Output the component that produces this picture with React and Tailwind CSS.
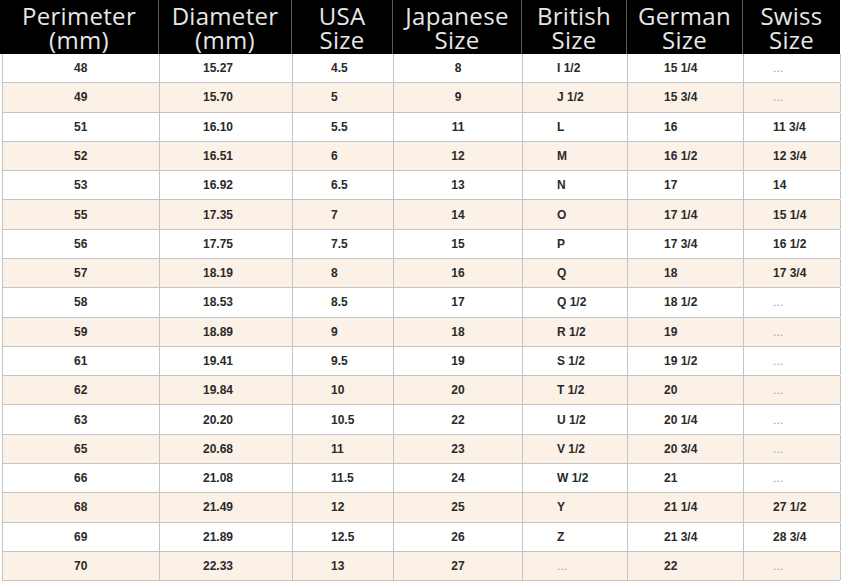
const headers = [
  ['Perimeter', '(mm)'],
  ['Diameter', '(mm)'],
  ['USA', 'Size'],
  ['Japanese', 'Size'],
  ['British', 'Size'],
  ['German', 'Size'],
  ['Swiss', 'Size'],
];

const rows = [
  ['48', '15.27', '4.5', '8', 'I 1/2', '15 1/4', '...'],
  ['49', '15.70', '5', '9', 'J 1/2', '15 3/4', '...'],
  ['51', '16.10', '5.5', '11', 'L', '16', '11 3/4'],
  ['52', '16.51', '6', '12', 'M', '16 1/2', '12 3/4'],
  ['53', '16.92', '6.5', '13', 'N', '17', '14'],
  ['55', '17.35', '7', '14', 'O', '17 1/4', '15 1/4'],
  ['56', '17.75', '7.5', '15', 'P', '17 3/4', '16 1/2'],
  ['57', '18.19', '8', '16', 'Q', '18', '17 3/4'],
  ['58', '18.53', '8.5', '17', 'Q 1/2', '18 1/2', '...'],
  ['59', '18.89', '9', '18', 'R 1/2', '19', '...'],
  ['61', '19.41', '9.5', '19', 'S 1/2', '19 1/2', '...'],
  ['62', '19.84', '10', '20', 'T 1/2', '20', '...'],
  ['63', '20.20', '10.5', '22', 'U 1/2', '20 1/4', '...'],
  ['65', '20.68', '11', '23', 'V 1/2', '20 3/4', '...'],
  ['66', '21.08', '11.5', '24', 'W 1/2', '21', '...'],
  ['68', '21.49', '12', '25', 'Y', '21 1/4', '27 1/2'],
  ['69', '21.89', '12.5', '26', 'Z', '21 3/4', '28 3/4'],
  ['70', '22.33', '13', '27', '...', '22', '...'],
];

// left padding of each data column, to follow the picture
const cellPad = ['pl-[71px]', 'pl-[43px]', 'pl-[38px]', 'justify-center', 'pl-[34px]', 'pl-[36px]', 'pl-[29px]'];

const App = () => {
  return (
    <div className="w-[843px] h-[581px] bg-white overflow-hidden">
      <div className="w-[840px] h-[54px] bg-black grid grid-cols-[159px_133px_101px_129px_105px_116px_97px]">
        {headers.map(([a, b], i) => (
          <div
            key={i}
            className={`flex flex-col items-center justify-center pt-[2px] text-[24px] leading-[24px] tracking-[0.3px] text-[#e6e6e6] ${i < 6 ? 'border-r border-[#5a5a5a]' : ''}`}
            style={{ fontFamily: "'Open Sans', 'Noto Sans', sans-serif" }}
          >
            <span>{a}</span>
            <span>{b}</span>
          </div>
        ))}
      </div>

      <div className="ml-[2px] w-[838px] h-[527px] flex flex-col">
        {rows.map((row, r) => (
          <div
            key={r}
            className={`flex-1 grid grid-cols-[157px_133px_101px_129px_105px_116px_97px] border-l border-b border-[#c4c4c4] ${r % 2 ? 'bg-[#fcf1e7]' : 'bg-white'}`}
          >
            {row.map((v, c) => (
              <div
                key={c}
                className={`flex items-center border-r border-[#c4c4c4] text-[12px] ${cellPad[c]} ${v === '...' ? 'text-[#9a9a9a] font-normal' : 'text-[#2a2a2a] font-bold'}`}
                style={{ fontFamily: "'Liberation Sans', Arial, sans-serif" }}
              >
                {v}
              </div>
            ))}
          </div>
        ))}
      </div>
    </div>
  );
};

export default App;
